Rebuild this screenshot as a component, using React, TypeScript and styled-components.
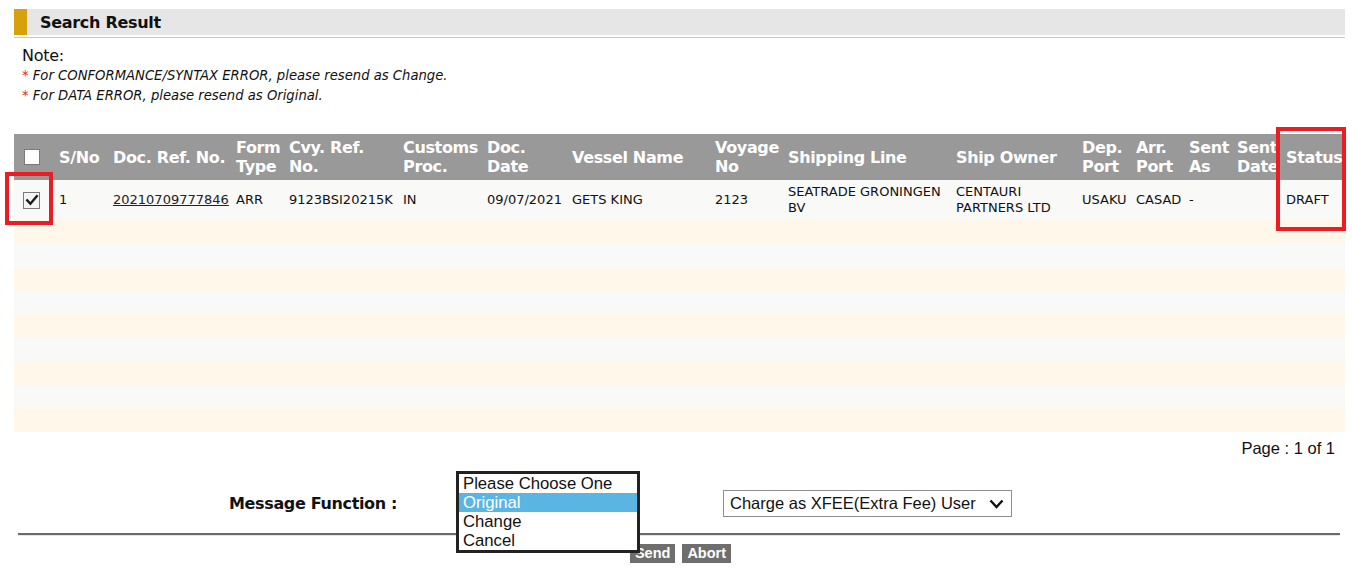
import React from 'react';
import styled, {createGlobalStyle} from "styled-components";

const GlobalStyle = createGlobalStyle`
  html, body {
    margin: 0;
    padding: 0;
    background: #ffffff;
  }
  body {
    font-family: "DejaVu Sans", Verdana, sans-serif;
    color: #111;
  }
`;

type Column = {
    title: string[]
    width: number
}

const columns: Column[] = [
    {title: [''], width: 41},
    {title: ['S/No'], width: 54},
    {title: ['Doc. Ref. No.'], width: 123},
    {title: ['Form', 'Type'], width: 53},
    {title: ['Cvy. Ref.', 'No.'], width: 114},
    {title: ['Customs', 'Proc.'], width: 84},
    {title: ['Doc.', 'Date'], width: 85},
    {title: ['Vessel Name'], width: 143},
    {title: ['Voyage', 'No'], width: 73},
    {title: ['Shipping Line'], width: 168},
    {title: ['Ship Owner'], width: 126},
    {title: ['Dep.', 'Port'], width: 54},
    {title: ['Arr.', 'Port'], width: 53},
    {title: ['Sent', 'As'], width: 48},
    {title: ['Sent', 'Date'], width: 49},
    {title: ['Status'], width: 63},
];

const record = {
    sno: '1',
    docRef: '20210709777846',
    formType: 'ARR',
    cvyRef: '9123BSI20215K',
    customs: 'IN',
    docDate: '09/07/2021',
    vessel: 'GETS KING',
    voyage: '2123',
    shippingLine: ['SEATRADE GRONINGEN', 'BV'],
    shipOwner: ['CENTAURI', 'PARTNERS LTD'],
    depPort: 'USAKU',
    arrPort: 'CASAD',
    sentAs: '-',
    sentDate: '',
    status: 'DRAFT',
};

const options = ['Please Choose One', 'Original', 'Change', 'Cancel'];

const CheckMark = () => (
    <svg width="14" height="14" viewBox="0 0 14 14">
        <path d="M2.2 7.4 L5.4 10.8 L11.8 3.2" fill="none" stroke="#1a1a1a" strokeWidth="2.4"
              strokeLinecap="square"/>
    </svg>
);

export default function App() {
    return (
        <Page>
            <GlobalStyle/>
            <TitleBar>
                <TitleMark/>
                <Title>Search Result</Title>
            </TitleBar>
            <TitleRule/>

            <Notes>
                <NoteHead>Note:</NoteHead>
                <NoteLine><Star>*</Star> For CONFORMANCE/SYNTAX ERROR, please resend as Change.</NoteLine>
                <NoteLine><Star>*</Star> For DATA ERROR, please resend as Original.</NoteLine>
            </Notes>

            <TableWrap>
                <Table>
                    <colgroup>
                        {columns.map((c, i) => <col key={i} style={{width: c.width}}/>)}
                    </colgroup>
                    <thead>
                    <tr>
                        {columns.map((c, i) => (
                            <Th key={i}>
                                {i === 0
                                    ? <Box/>
                                    : c.title.map((t, j) => <div key={j}>{t}</div>)}
                            </Th>
                        ))}
                    </tr>
                    </thead>
                    <tbody>
                    <DataRow>
                        <Td><Box checked><CheckMark/></Box></Td>
                        <Td>{record.sno}</Td>
                        <Td><DocLink href="#">{record.docRef}</DocLink></Td>
                        <Td>{record.formType}</Td>
                        <Td>{record.cvyRef}</Td>
                        <Td>{record.customs}</Td>
                        <Td>{record.docDate}</Td>
                        <Td>{record.vessel}</Td>
                        <Td>{record.voyage}</Td>
                        <Td>{record.shippingLine.map((l, i) => <div key={i}>{l}</div>)}</Td>
                        <Td>{record.shipOwner.map((l, i) => <div key={i}>{l}</div>)}</Td>
                        <Td>{record.depPort}</Td>
                        <Td>{record.arrPort}</Td>
                        <Td>{record.sentAs}</Td>
                        <Td>{record.sentDate}</Td>
                        <Td>{record.status}</Td>
                    </DataRow>
                    {Array.from({length: 9}).map((_, i) => (
                        <EmptyRow key={i} cream={i % 2 === 0}>
                            <td colSpan={columns.length}/>
                        </EmptyRow>
                    ))}
                    </tbody>
                </Table>
                <Highlight style={{left: -9, top: -8, width: 48, height: 53}}/>
                <Highlight style={{left: 1262, top: -53, width: 70, height: 104}}/>
            </TableWrap>

            <Pager>Page : 1 of 1</Pager>

            <FunctionRow>
                <FunctionLabel>Message Function :</FunctionLabel>
                <SelectCell>
                    <ListBox>
                        {options.map(o => (
                            <Option key={o} selected={o === 'Original'}>{o}</Option>
                        ))}
                    </ListBox>
                </SelectCell>
                <ChargeSelect>
                    <span>Charge as XFEE(Extra Fee) User</span>
                    <svg width="15" height="10" viewBox="0 0 15 10">
                        <path d="M1.5 1.5 L7.5 8 L13.5 1.5" fill="none" stroke="#111" strokeWidth="2.4"/>
                    </svg>
                </ChargeSelect>
            </FunctionRow>

            <BottomRule/>

            <Buttons>
                <Button>Send</Button>
                <Button>Abort</Button>
            </Buttons>
        </Page>
    );
}

const Page = styled.div`
  padding: 9px 7px 0 14px;
  width: 1331px;
`;

const TitleBar = styled.div`
  display: flex;
  align-items: center;
  height: 26px;
  background: #e6e6e6;
`;

const TitleMark = styled.div`
  width: 13px;
  height: 100%;
  background: #d6a10c;
`;

const Title = styled.div`
  margin-left: 13px;
  font-size: 16px;
  font-weight: bold;
  color: #111;
  letter-spacing: -0.3px;
`;

const TitleRule = styled.div`
  margin-top: 2px;
  height: 1px;
  background: #c8c8c8;
`;

const Notes = styled.div`
  padding: 8px 0 0 8px;
  height: 88px;
`;

const NoteHead = styled.div`
  font-size: 16px;
  line-height: 19px;
  letter-spacing: -0.3px;
`;

const NoteLine = styled.div`
  font-size: 13.2px;
  line-height: 19px;
  font-style: italic;
  margin-top: 1px;
`;

const Star = styled.span`
  color: #e81c1c;
  font-style: normal;
`;

const TableWrap = styled.div`
  position: relative;
`;

const Table = styled.table`
  width: 1331px;
  table-layout: fixed;
  border-collapse: collapse;
`;

const Th = styled.th`
  height: 46px;
  padding: 0 0 0 4px;
  background: #999999;
  color: #ffffff;
  font-size: 16px;
  font-weight: bold;
  line-height: 19px;
  text-align: left;
  vertical-align: middle;
  white-space: nowrap;
  overflow: hidden;
  letter-spacing: -0.35px;
`;

const DataRow = styled.tr`
  background: #f9f9f7;
`;

const Td = styled.td`
  height: 40px;
  padding: 0 0 0 4px;
  font-size: 13px;
  line-height: 16px;
  vertical-align: middle;
  white-space: nowrap;
  overflow: hidden;
  color: #111;
`;

const EmptyRow = styled.tr<{ cream: boolean }>`
  height: 23.5px;
  background: ${p => p.cream ? '#fff7ea' : '#f9f9f7'};
`;

const Box = styled.span<{ checked?: boolean }>`
  display: flex;
  align-items: center;
  justify-content: center;
  margin-left: ${p => p.checked ? 5 : 6}px;
  width: ${p => p.checked ? 15 : 14}px;
  height: ${p => p.checked ? 15 : 14}px;
  border: 1px solid #7a7a7a;
  background: ${p => p.checked ? '#f4f4f4' : '#ffffff'};
`;

const DocLink = styled.a`
  color: #222;
  text-decoration: underline;
`;

const Highlight = styled.div`
  position: absolute;
  box-sizing: border-box;
  border: 4px solid #ec1c24;
  margin-top: 46px;
  pointer-events: none;
`;

const Pager = styled.div`
  padding: 7px 10px 0 0;
  text-align: right;
  font-family: "Liberation Sans", Arial, sans-serif;
  font-size: 16.5px;
  line-height: 19px;
`;

const FunctionRow = styled.div`
  display: flex;
  align-items: center;
  height: 28px;
  margin-top: 32px;
  padding-left: 215px;
`;

const FunctionLabel = styled.div`
  width: 227px;
  font-size: 16px;
  font-weight: bold;
  letter-spacing: -0.35px;
`;

const SelectCell = styled.div`
  position: relative;
  width: 267px;
  height: 20px;
`;

const ListBox = styled.div`
  position: absolute;
  left: 0;
  top: -23px;
  width: 184px;
  box-sizing: border-box;
  border: 3px solid #222;
  background: #fff;
  padding: 0;
  z-index: 2;
`;

const Option = styled.div<{ selected: boolean }>`
  padding-left: 4px;
  height: 19px;
  line-height: 19px;
  font-family: "Liberation Sans", Arial, sans-serif;
  font-size: 16.7px;
  color: ${p => p.selected ? '#ffffff' : '#111'};
  background: ${p => p.selected ? '#5bb5e2' : 'transparent'};
`;

const ChargeSelect = styled.div`
  display: flex;
  align-items: center;
  justify-content: space-between;
  box-sizing: border-box;
  width: 289px;
  height: 27px;
  padding: 0 7px 0 6px;
  border: 1px solid #8e8e8e;
  font-family: "Liberation Sans", Arial, sans-serif;
  font-size: 16.5px;
  color: #111;
`;

const BottomRule = styled.div`
  margin: 15px 5px 0 4px;
  height: 1px;
  border-top: 2px solid #6b6b6b;
  background: #e6e6e6;
`;

const Buttons = styled.div`
  display: flex;
  justify-content: center;
  gap: 7px;
  margin-top: 8px;
  padding-left: 2px;
`;

const Button = styled.button`
  height: 19px;
  padding: 0 5px;
  border: none;
  background: #6e6e6e;
  color: #ffffff;
  font-family: "Liberation Sans", Arial, sans-serif;
  font-weight: bold;
  font-size: 14.5px;
  line-height: 19px;
`;
